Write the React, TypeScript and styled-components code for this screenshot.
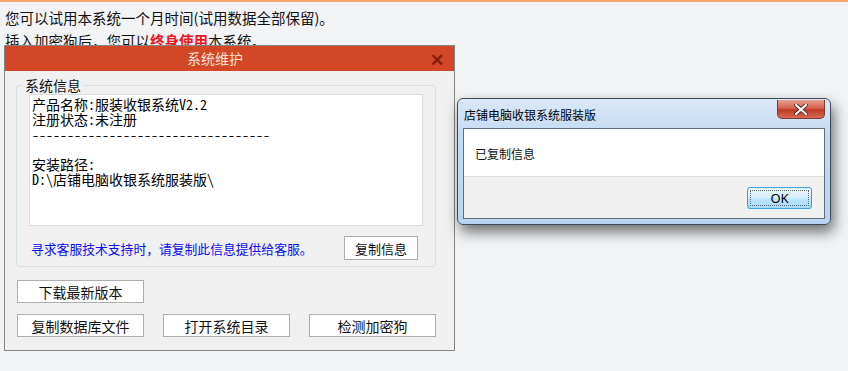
import styled, { createGlobalStyle } from 'styled-components'

const GlobalStyle = createGlobalStyle`
  html, body {
    margin: 0;
    padding: 0;
    background: #f2f3f5;
  }
  body {
    width: 848px;
    height: 371px;
    overflow: hidden;
    font-family: "Noto Sans CJK SC", "Noto Sans", sans-serif;
    color: #111;
  }
`

const Page = styled.div`
  position: relative;
  width: 848px;
  height: 371px;
  border-top: 2px solid #f6a471;
  box-sizing: border-box;
`

const Notice = styled.div`
  padding: 4px 0 0 5px;
  font-size: 14.5px;
  line-height: 23px;
`

const Strong = styled.span`
  color: #f0141e;
  font-weight: 700;
`

const Window = styled.div`
  position: absolute;
  left: 4px;
  top: 43px;
  width: 449px;
  border: 1px solid #858585;
  background: #f0f0f0;
`

const TitleBar = styled.div`
  position: relative;
  height: 25px;
  padding-right: 29px;
  background: #d24726;
  color: #fbe3da;
  font-size: 14px;
  line-height: 25px;
  text-align: center;
`

const CloseX = styled.span`
  position: absolute;
  right: 10px;
  top: 0;
  color: #8a1a0e;
  font-size: 17px;
  font-weight: 700;
`

const Body = styled.div`
  padding: 6px 18px 13px 11px;
  display: flex;
  flex-direction: column;
`

const Group = styled.fieldset`
  margin: 0;
  padding: 0 12px 6px 12px;
  border: 1px solid #d8dfe6;
  border-radius: 3px;
  display: flex;
  flex-direction: column;
`

const Legend = styled.legend`
  margin-left: -6px;
  padding: 0 2px;
  font-size: 14px;
  line-height: 16px;
`

const InfoBox = styled.div`
  margin-top: 1px;
  height: 126px;
  background: #fff;
  border: 1px solid #dcdcdc;
  padding: 2px 2px;
  font-family: "Noto Sans Mono CJK SC", "Liberation Mono", monospace;
  font-size: 14px;
  line-height: 15px;
  white-space: pre;
  color: #000;
`

const SupportRow = styled.div`
  margin-top: 10px;
  padding: 0 5px 0 2px;
  display: flex;
  align-items: center;
  justify-content: space-between;
`

const SupportText = styled.span`
  color: #0c0cf5;
  font-size: 12.8px;
`

const Button = styled.button<{ $w?: number; $h?: number; $fs?: number }>`
  width: ${p => p.$w ?? 127}px;
  height: ${p => p.$h ?? 23}px;
  padding: 0;
  background: #fff;
  border: 1px solid #adadad;
  font-family: "Noto Sans CJK SC", sans-serif;
  font-size: ${p => p.$fs ?? 14}px;
  color: #111;
`

const ButtonRow = styled.div<{ $top: number }>`
  margin-top: ${p => p.$top}px;
  padding-left: 1px;
  display: flex;
  gap: 19px;
`

const MsgBox = styled.div`
  position: absolute;
  left: 457px;
  top: 96px;
  width: 372px;
  height: 125px;
  border: 1px solid #3f4b58;
  border-radius: 6px;
  background: linear-gradient(180deg, #dbe8f6 0%, #c3daf3 30%, #b9d4f1 100%);
  box-shadow: 3px 7px 14px rgba(0, 0, 0, 0.55);
  display: flex;
  flex-direction: column;
`

const MsgTitle = styled.div`
  position: relative;
  height: 29px;
  padding-left: 6px;
  font-size: 12px;
  line-height: 31px;
  color: #000;
`

const MsgClose = styled.div`
  position: absolute;
  right: 5px;
  top: 1px;
  width: 46px;
  height: 18px;
  border: 1px solid #7c3a30;
  border-top: none;
  border-radius: 0 0 5px 5px;
  background: linear-gradient(180deg, #e8a093 0%, #d4604c 45%, #c03a26 55%, #d66a55 100%);
  display: flex;
  align-items: center;
  justify-content: center;
`

const MsgPanel = styled.div`
  margin: 0 5px;
  height: 89px;
  border: 1px solid #5f6d7c;
  display: flex;
  flex-direction: column;
`

const MsgContent = styled.div`
  height: 47px;
  background: #fff;
  padding-left: 11px;
  font-size: 12px;
  line-height: 50px;
`

const MsgFooter = styled.div`
  flex: 1;
  background: #f0f0f0;
  border-top: 1px solid #dfdfdf;
  display: flex;
  align-items: center;
  justify-content: flex-end;
  padding-right: 12px;
`

const OkButton = styled.button`
  width: 65px;
  height: 22px;
  padding: 0;
  border: 1px solid #3c9fd8;
  border-radius: 3px;
  background: linear-gradient(180deg, #eaf6fd 0%, #d9effb 45%, #bee6fd 55%, #a7d9f5 100%);
  font-family: "Noto Sans", sans-serif;
  font-size: 13px;
  color: #000;
  display: flex;
  align-items: center;
  justify-content: center;
`

const FocusRing = styled.span`
  width: 59px;
  height: 16px;
  border: 1px dotted #5a6a7a;
  box-sizing: border-box;
  display: flex;
  align-items: center;
  justify-content: center;
`

const info = `产品名称:服装收银系统V2.2
注册状态:未注册
----------------------------------

安装路径:
D:\\店铺电脑收银系统服装版\\`

export default function App() {
  return (
    <>
      <GlobalStyle />
      <Page>
        <Notice>
          <div>您可以试用本系统一个月时间(试用数据全部保留)。</div>
          <div>
            插入加密狗后，您可以<Strong>终身使用</Strong>本系统。
          </div>
        </Notice>

        <Window>
          <TitleBar>
            系统维护
            <CloseX>✕</CloseX>
          </TitleBar>
          <Body>
            <Group>
              <Legend>系统信息</Legend>
              <InfoBox>{info}</InfoBox>
              <SupportRow>
                <SupportText>寻求客服技术支持时，请复制此信息提供给客服。</SupportText>
                <Button $w={74} $h={24} $fs={13}>复制信息</Button>
              </SupportRow>
            </Group>
            <ButtonRow $top={13}>
              <Button>下载最新版本</Button>
            </ButtonRow>
            <ButtonRow $top={11}>
              <Button>复制数据库文件</Button>
              <Button>打开系统目录</Button>
              <Button>检测加密狗</Button>
            </ButtonRow>
          </Body>
        </Window>

        <MsgBox>
          <MsgTitle>
            店铺电脑收银系统服装版
            <MsgClose>
              <svg width="14" height="11" viewBox="0 0 14 11">
                <path d="M2 1 L12 10 M12 1 L2 10" stroke="#5a2a22" strokeWidth="4" strokeLinecap="round" />
                <path d="M2 1 L12 10 M12 1 L2 10" stroke="#fff" strokeWidth="2.2" strokeLinecap="round" />
              </svg>
            </MsgClose>
          </MsgTitle>
          <MsgPanel>
            <MsgContent>已复制信息</MsgContent>
            <MsgFooter>
              <OkButton>
                <FocusRing>OK</FocusRing>
              </OkButton>
            </MsgFooter>
          </MsgPanel>
        </MsgBox>
      </Page>
    </>
  )
}
